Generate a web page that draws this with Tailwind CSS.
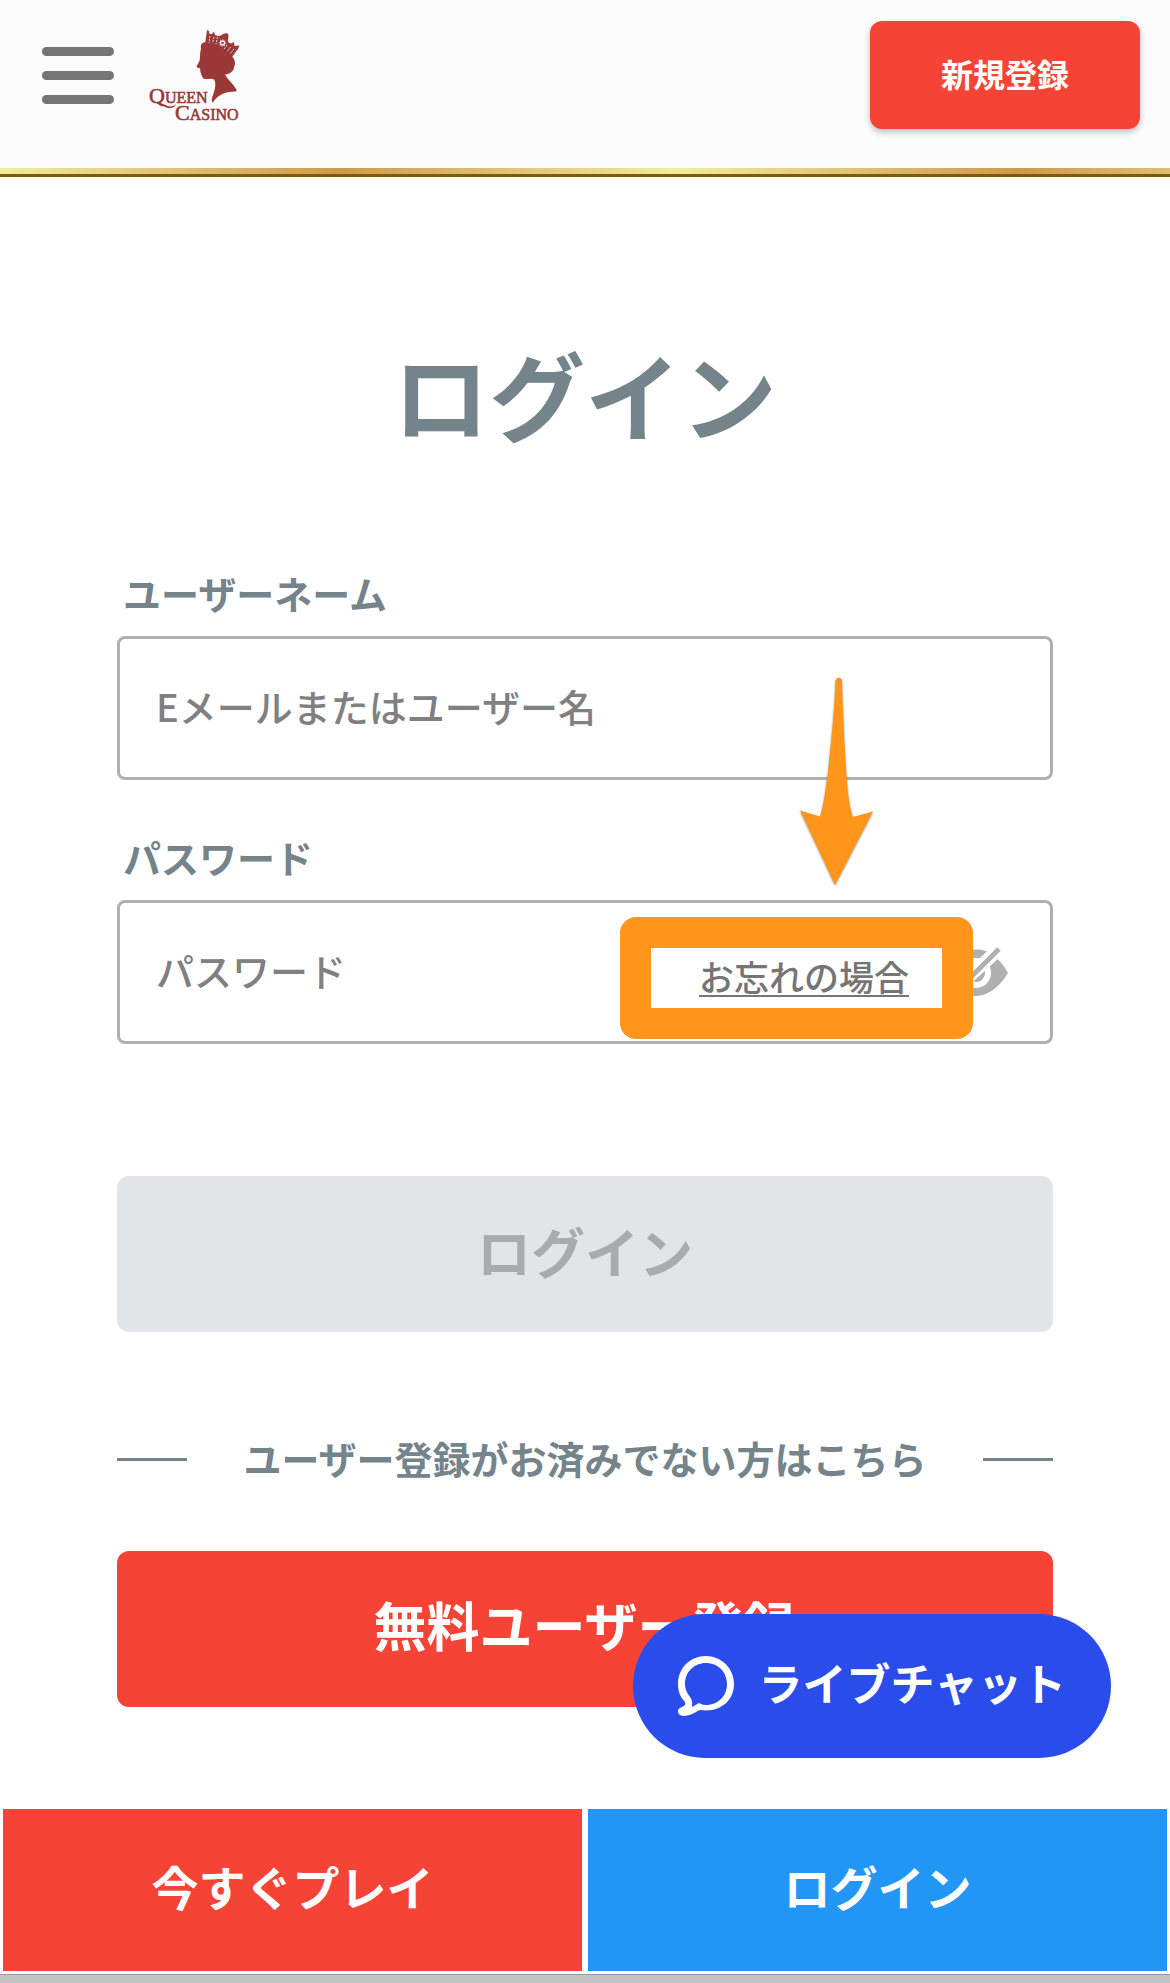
<!DOCTYPE html>
<html lang="ja">
<head>
    <meta charset="UTF-8">
    <meta name="viewport" content="width=device-width, initial-scale=1.0">
    <title>ログイン - Queen Casino</title>
    <script src="https://cdn.jsdelivr.net/npm/@tailwindcss/browser@4"></script>
</head>
<body class="min-h-screen bg-white font-['Noto_Sans_CJK_JP',sans-serif] text-[#75838a]">

    <header>
        <div class="flex h-[168px] items-start justify-between bg-[#fcfcfc] pl-[42px] pr-[30px]">
            <div class="flex items-start gap-9 pt-[30px]">
                <button type="button" aria-label="メニュー" class="mt-[17px] flex w-[72px] flex-col gap-[15px]">
                    <span class="h-[9px] rounded-full bg-[#757575]"></span>
                    <span class="h-[9px] rounded-full bg-[#757575]"></span>
                    <span class="h-[9px] rounded-full bg-[#757575]"></span>
                </button>
                <a href="#" aria-label="Queen Casino">
                    <svg class="h-[90px] w-[90px] overflow-visible" viewBox="0 0 90 90" fill="#9b3838">
                        <!-- head -->
                        <path d="M54 12.500C51 13 50.500 16 51 19C49.500 23 50.500 27 49.500 31L46.500 36.500C46.500 38 48.500 38 50 38.300L50.500 42C51.500 45 52 48 54.500 49C58 49.500 61 48 64 49.500C66.500 53 65 60 63 65C61.500 68 61.500 71 62.500 73C67 66 73 61.500 86 61.500C87.500 60 85.500 58.500 84 56C81 52 77 48.500 75 44.500C80 44 84 41 84 37C86 34 85 29 82 26.500C79 20 70 13 61 12.300Z"/>
                        <!-- crown -->
                        <path d="M55 14L57 0L59 1L59.500 4L62 4L64 1.500L65 5L68 6L71 5.500L73 4L77 3L78.500 5L78 12L81 13.500L84 12L84.500 16L89.500 15.500L88 19L82 27C75 18 66 13.500 55 14Z"/>
                        <path d="M60 6L59 13M64 7L62.500 13M67.500 7L66 14M77 15L74 19M80.500 17L77 22M84 19L80 24" fill="none" stroke="#fcfcfc" stroke-width=".8" stroke-dasharray="2 1"/>
                        <circle cx="72.500" cy="13" r="2" fill="none" stroke="#fcfcfc" stroke-width="1.300"/>
                        <circle cx="72.500" cy="13" r="3.300" fill="none" stroke="#fcfcfc" stroke-width=".8" stroke-dasharray="1 1.500"/>
                        <!-- tail of the Q -->
                        <path d="M7 73C13 73 16 76 20 76.500C23 76.500 25 75 26 74C25 77 22 78.500 19 78C14 77.500 12 74 7 74Z"/>
                        <g font-family="Liberation Serif, serif" stroke="#9b3838" stroke-width=".6">
                            <text x="-1" y="73" font-size="22">Q<tspan font-size="16">UEEN</tspan></text>
                            <text x="25" y="90" font-size="22">C<tspan font-size="16">ASINO</tspan></text>
                        </g>
                    </svg>
                </a>
            </div>
            <a href="#" class="mt-[21px] flex h-[108px] w-[270px] items-center justify-center rounded-xl bg-[#f54336] pb-1 text-[32px] font-bold text-white shadow-[0_3px_6px_rgba(0,0,0,0.25)]">新規登録</a>
        </div>
        <div class="h-[9px] border-b-3 border-[#80590e] bg-[linear-gradient(90deg,#f1ee9a_0%,#cd9a4d_29%,#f1ee9a_58%,#cd9a4d_87%,#f1ee9a_116%)]"></div>
    </header>

    <main class="px-[10%] pt-[168px] pb-[280px]">
        <h1 class="mb-[125px] text-center text-[96px] leading-none font-bold">ログイン</h1>

        <form>
            <label for="username" class="mb-[17px] block pl-1.5 text-[38px] leading-[53px] font-bold">ユーザーネーム</label>
            <input type="text" id="username" placeholder="Eメールまたはユーザー名" class="mb-[50px] block h-36 w-full rounded-lg border-3 border-[#b0b0b0] px-9 pb-1.5 text-[38px] font-medium text-[#757575] placeholder:text-[#808080]">

            <label for="password" class="mb-[17px] block pl-1.5 text-[38px] leading-[53px] font-bold">パスワード</label>
            <div class="relative flex h-36 items-center rounded-lg border-3 border-[#b0b0b0] pr-[42px]">
                <input type="password" id="password" placeholder="パスワード" class="h-full min-w-0 flex-1 px-9 pb-1.5 text-[38px] font-medium text-[#757575] outline-none placeholder:text-[#808080]">
                <a href="#" class="mt-2 text-[35px] font-medium text-[#757575] underline decoration-2 underline-offset-4">お忘れの場合</a>
                <button type="button" aria-label="パスワードを表示" class="ml-[35px] h-16 w-16">
                    <svg viewBox="0 0 64 64" fill="none">
                        <path d="M0 33C15 6 38 5 50 16Q58 22 64 33C52 53 38 56 32 56C20 56 8 50 0 33Z" fill="#b0b0b0"/>
                        <circle cx="32" cy="33" r="12" stroke="#fff" stroke-width="6"/>
                        <path d="M7 53L53 11" stroke="#fff" stroke-width="13"/>
                        <path d="M10 54L55 9" stroke="#b0b0b0" stroke-width="5"/>
                        <path d="M32 42C37 42 40 38 40 34Z" fill="#b0b0b0"/>
                    </svg>
                </button>

                <!-- callout around the reset link -->
                <div class="pointer-events-none absolute top-[14px] right-[77px] h-[122px] w-[353px] rounded-2xl border-31 border-[#ff961b]"></div>
                <svg class="pointer-events-none absolute right-[176px] bottom-[154px] h-[210px] w-[74px] overflow-visible drop-shadow-[0_1px_1px_rgba(0,0,0,0.4)]" viewBox="0 0 74 210" fill="#ff961b">
                    <path d="M35.500 4C36 -.5 41.500 -.5 42 4C43 40 45 80 47 105C48 120 50 132 53 140L73 134.500L35 208L0 133.500L20 139.500C23 132 26 110 28 95C31 65 34 40 35.500 4Z"/>
                </svg>
            </div>

            <button type="submit" disabled class="mt-[132px] block h-[156px] w-full rounded-xl bg-[#e1e5e8] pb-2 text-[54px] font-bold text-[#aaabac]">ログイン</button>
        </form>

        <div class="mt-[99px] mb-16 flex items-center justify-between">
            <span class="h-[3px] w-[70px] bg-[#75838a]"></span>
            <p class="pb-[3px] text-[38px] leading-[53px] font-bold">ユーザー登録がお済みでない方はこちら</p>
            <span class="h-[3px] w-[70px] bg-[#75838a]"></span>
        </div>

        <a href="#" class="flex h-[156px] items-center justify-center rounded-xl bg-[#f54336] pb-2 text-[53px] font-bold text-white">無料ユーザー登録</a>
    </main>

    <button type="button" class="fixed right-[59px] bottom-[225px] z-20 flex h-36 items-center gap-6 rounded-full bg-[#2a4cea] px-[45px] text-[44px] font-bold text-white">
        <svg class="h-[60px] w-[56px]" viewBox="0 0 56 60" fill="#fff">
            <path fill-rule="evenodd" d="M28 0C43 0 56 12 56 28C56 44 43 57 22 54C16 57 11 60 5 60C0 60 -2 54 2 52C5 50 8 50 7 46C2 41 0 35 0 28C0 12 12 0 28 0ZM28 7C16 7 7 16 7 28C7 34 10 38 12 41C15 45 14 48 14 51L21 47C23 48 25 49 28 49C40 49 49 40 49 28C49 16 40 7 28 7Z"/>
        </svg>
        <span class="pb-2">ライブチャット</span>
    </button>

    <div class="fixed inset-x-0 bottom-0 z-10">
        <nav class="grid grid-cols-2 gap-1.5 bg-white p-[3px] text-[47px] font-bold text-white">
            <a href="#" class="flex h-[162px] items-center justify-center bg-[#f54336] pb-2">今すぐプレイ</a>
            <a href="#" class="flex h-[162px] items-center justify-center bg-[#2196f5] pb-2">ログイン</a>
        </nav>
        <div class="h-[9px] border-t border-[#979797] bg-[#c3c3c3]"></div>
    </div>

</body>
</html>
